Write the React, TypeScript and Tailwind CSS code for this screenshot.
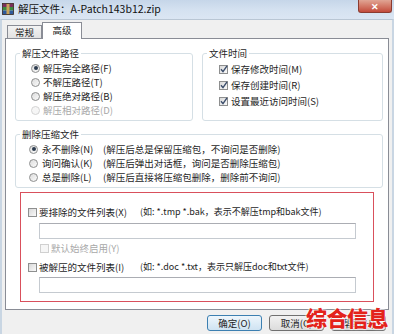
import type { ReactNode } from "react";

const cjk = "font-['Noto_Sans_CJK_SC','Noto_Sans',sans-serif]";

function Radio({ checked, disabled }: { checked?: boolean; disabled?: boolean }) {
  return (
    <span
      className={`flex size-[9px] shrink-0 items-center justify-center rounded-full border ${
        disabled
          ? "border-[#d4d4d4] bg-[#f6f6f6]"
          : "border-[#8e8f8f] bg-gradient-to-br from-[#dcdcdc] to-[#fbfbfb]"
      }`}
    >
      {checked && <span className="size-[4px] rounded-full bg-[#2c3b4f]" />}
    </span>
  );
}

function Check({ checked, disabled }: { checked?: boolean; disabled?: boolean }) {
  return (
    <span
      className={`flex size-[9px] shrink-0 items-center justify-center border ${
        disabled
          ? "border-[#d0d0d0] bg-[#f6f6f6]"
          : "border-[#8e8f8f] bg-gradient-to-br from-[#d9d9d9] to-[#fafafa]"
      }`}
    >
      {checked && (
        <svg viewBox="0 0 8 8" className="size-[8px] overflow-visible" aria-hidden>
          <path d="M1 4.2 L3 6.6 L7 0.8" fill="none" stroke="#3b4d6b" strokeWidth="1.4" />
        </svg>
      )}
    </span>
  );
}

function Group({ label, className, children }: { label: string; className: string; children: ReactNode }) {
  return (
    <fieldset className={`rounded-[3px] border border-[#d5dfe5] ${className}`}>
      <legend className="ml-[4px] px-[2px] text-[9.5px] leading-[11px] text-[#1e1e1e]">{label}</legend>
      {children}
    </fieldset>
  );
}

const pathOptions = [
  { label: "解压完全路径(F)", checked: true },
  { label: "不解压路径(T)" },
  { label: "解压绝对路径(B)" },
  { label: "解压相对路径(D)", disabled: true },
];

const timeOptions = ["保存修改时间(M)", "保存创建时间(R)", "设置最近访问时间(S)"];

const deleteOptions = [
  { label: "永不删除(N)", note: "(解压后总是保留压缩包，不询问是否删除)", checked: true },
  { label: "询问确认(K)", note: "(解压后弹出对话框，询问是否删除压缩包)" },
  { label: "总是删除(L)", note: "(解压后直接将压缩包删除，删除前不询问)" },
];

function RarIcon() {
  return (
    <svg viewBox="0 0 12 12" className="ml-[2px] mt-[3px] size-[12px] shrink-0" aria-hidden>
      <rect x="0.5" y="0.5" width="11" height="3.5" fill="#7a2f5c" />
      <rect x="0.5" y="4" width="11" height="3.5" fill="#3b8a3e" />
      <rect x="0.5" y="7.5" width="11" height="4" fill="#2f5a9c" />
      <rect x="4.5" y="0.5" width="3" height="11" fill="#c9a25a" />
      <rect x="0.5" y="0.5" width="11" height="11" fill="none" stroke="#3a2a20" strokeWidth="0.8" />
    </svg>
  );
}

export default function App() {
  return (
    <div className={`relative flex h-[334px] w-[394px] flex-col overflow-hidden bg-[#f0f0f0] text-[#1e1e1e] ${cjk}`}>
      <div className="flex h-[19px] shrink-0 items-start bg-gradient-to-b from-[#c6d6e9] via-[#d4e1f0] to-[#dbe6f3]">
        <RarIcon />
        <span className="ml-[4px] mt-[2px] text-[10.5px] leading-[13px] text-[#111]">解压文件：A-Patch143b12.zip</span>
        <div className="ml-auto mr-[2px] flex h-[13px] w-[34px] items-center justify-center rounded-b-[3px] border border-t-0 border-[#8b3b30] bg-gradient-to-b from-[#e0a494] to-[#c24a3b] text-[9px] font-bold leading-none text-white">
          ✕
        </div>
      </div>

      <div className="flex flex-1 flex-col border-x-[2px] border-t border-[#c9d6e3] border-t-[#b9c6d4]">
        <div className="flex h-[18px] items-end pl-[5px]">
          <div className="flex h-[13px] w-[35px] items-center justify-center border border-b-0 border-[#898c95] bg-gradient-to-b from-[#f3f3f3] to-[#e2e2e2] text-[9.5px]">
            常规
          </div>
          <div className="relative -mb-px flex h-[17px] w-[40px] items-center justify-center border border-b-0 border-[#898c95] bg-white pb-[2px] text-[9.5px]">
            高级
          </div>
        </div>

        <div className="mx-[3px] h-[272px] border border-[#898c95] bg-white pl-[9px] pr-[5px] pt-[9px]">
          <div className="flex gap-[9px]">
            <Group label="解压文件路径" className="h-[73px] w-[178px]">
              <div className="pl-[15px] pt-[2px]">
                {pathOptions.map((o) => (
                  <div className="flex h-[14px] items-center gap-[3px]" key={o.label}>
                    <Radio checked={o.checked} disabled={o.disabled} />
                    <span className={`text-[9.5px] leading-[14px] ${o.disabled ? "text-[#a8a8a8]" : ""}`}>{o.label}</span>
                  </div>
                ))}
              </div>
            </Group>
            <Group label="文件时间" className="h-[73px] flex-1">
              <div className="pl-[16px] pt-[2px]">
                {timeOptions.map((t) => (
                  <div className="flex h-[16px] items-center gap-[3px]" key={t}>
                    <Check checked />
                    <span className="text-[9.5px] leading-[14px]">{t}</span>
                  </div>
                ))}
              </div>
            </Group>
          </div>

          <Group label="删除压缩文件" className="mt-[8px] h-[59px]">
            <div className="pl-[13px] pt-[2px]">
              {deleteOptions.map((o) => (
                <div className="flex h-[14px] items-center gap-[4px]" key={o.label}>
                  <Radio checked={o.checked} />
                  <span className="w-[57px] shrink-0 text-[9.5px] leading-[14px]">{o.label}</span>
                  <span className="text-[9.5px] leading-[14px]">{o.note}</span>
                </div>
              ))}
            </div>
          </Group>

          <div className="ml-[5px] mt-[4px] w-[354px] border border-[#d9505c] pb-[8px] pl-[7px] pt-[12px]">
            <div className="flex h-[14px] items-center gap-[2px]">
              <Check />
              <span className="w-[99px] shrink-0 text-[9.5px] leading-[14px]">要排除的文件列表(X)</span>
              <span className="text-[9px] leading-[14px]">(如: *.tmp *.bak，表示不解压tmp和bak文件)</span>
            </div>
            <div className="ml-[11px] mt-[4px] h-[16px] w-[317px] border border-[#c5cad0] border-t-[#abadb3] bg-white" />
            <div className="ml-[12px] mt-[2px] flex h-[14px] items-center gap-[2px]">
              <Check disabled />
              <span className="text-[9.5px] leading-[14px] text-[#a8a8a8]">默认始终启用(Y)</span>
            </div>
            <div className="mt-[5px] flex h-[14px] items-center gap-[2px]">
              <Check />
              <span className="w-[99px] shrink-0 text-[9.5px] leading-[14px]">被解压的文件列表(I)</span>
              <span className="text-[9px] leading-[14px]">(如: *.doc *.txt，表示只解压doc和txt文件)</span>
            </div>
            <div className="ml-[11px] mt-[3px] h-[16px] w-[317px] border border-[#c5cad0] border-t-[#abadb3] bg-white" />
          </div>
        </div>

        <div className="mt-[5px] flex justify-end gap-[7px] pr-[6px]">
          <button className="h-[16px] w-[55px] rounded-[3px] border border-[#3c7fb1] bg-gradient-to-b from-[#eef6fc] to-[#cfe3f2] text-[9.5px] leading-[14px]">
            确定(O)
          </button>
          <button className="h-[16px] w-[55px] rounded-[3px] border border-[#707070] bg-gradient-to-b from-[#f2f2f2] to-[#dcdcdc] text-[9.5px] leading-[14px]">
            取消(C)
          </button>
          <button className="h-[16px] w-[55px] rounded-[3px] border border-[#707070] bg-gradient-to-b from-[#f2f2f2] to-[#dcdcdc] text-[9.5px] leading-[14px]">
            帮助(H)
          </button>
        </div>
      </div>

      <div className="absolute bottom-[6px] right-[6px] text-[21px] font-black leading-none tracking-[-0.5px] text-[#e3231b] [text-shadow:0_0_2px_#fff,0_0_2px_#fff,0_0_1px_#fff]">
        综合信息
      </div>
    </div>
  );
}
